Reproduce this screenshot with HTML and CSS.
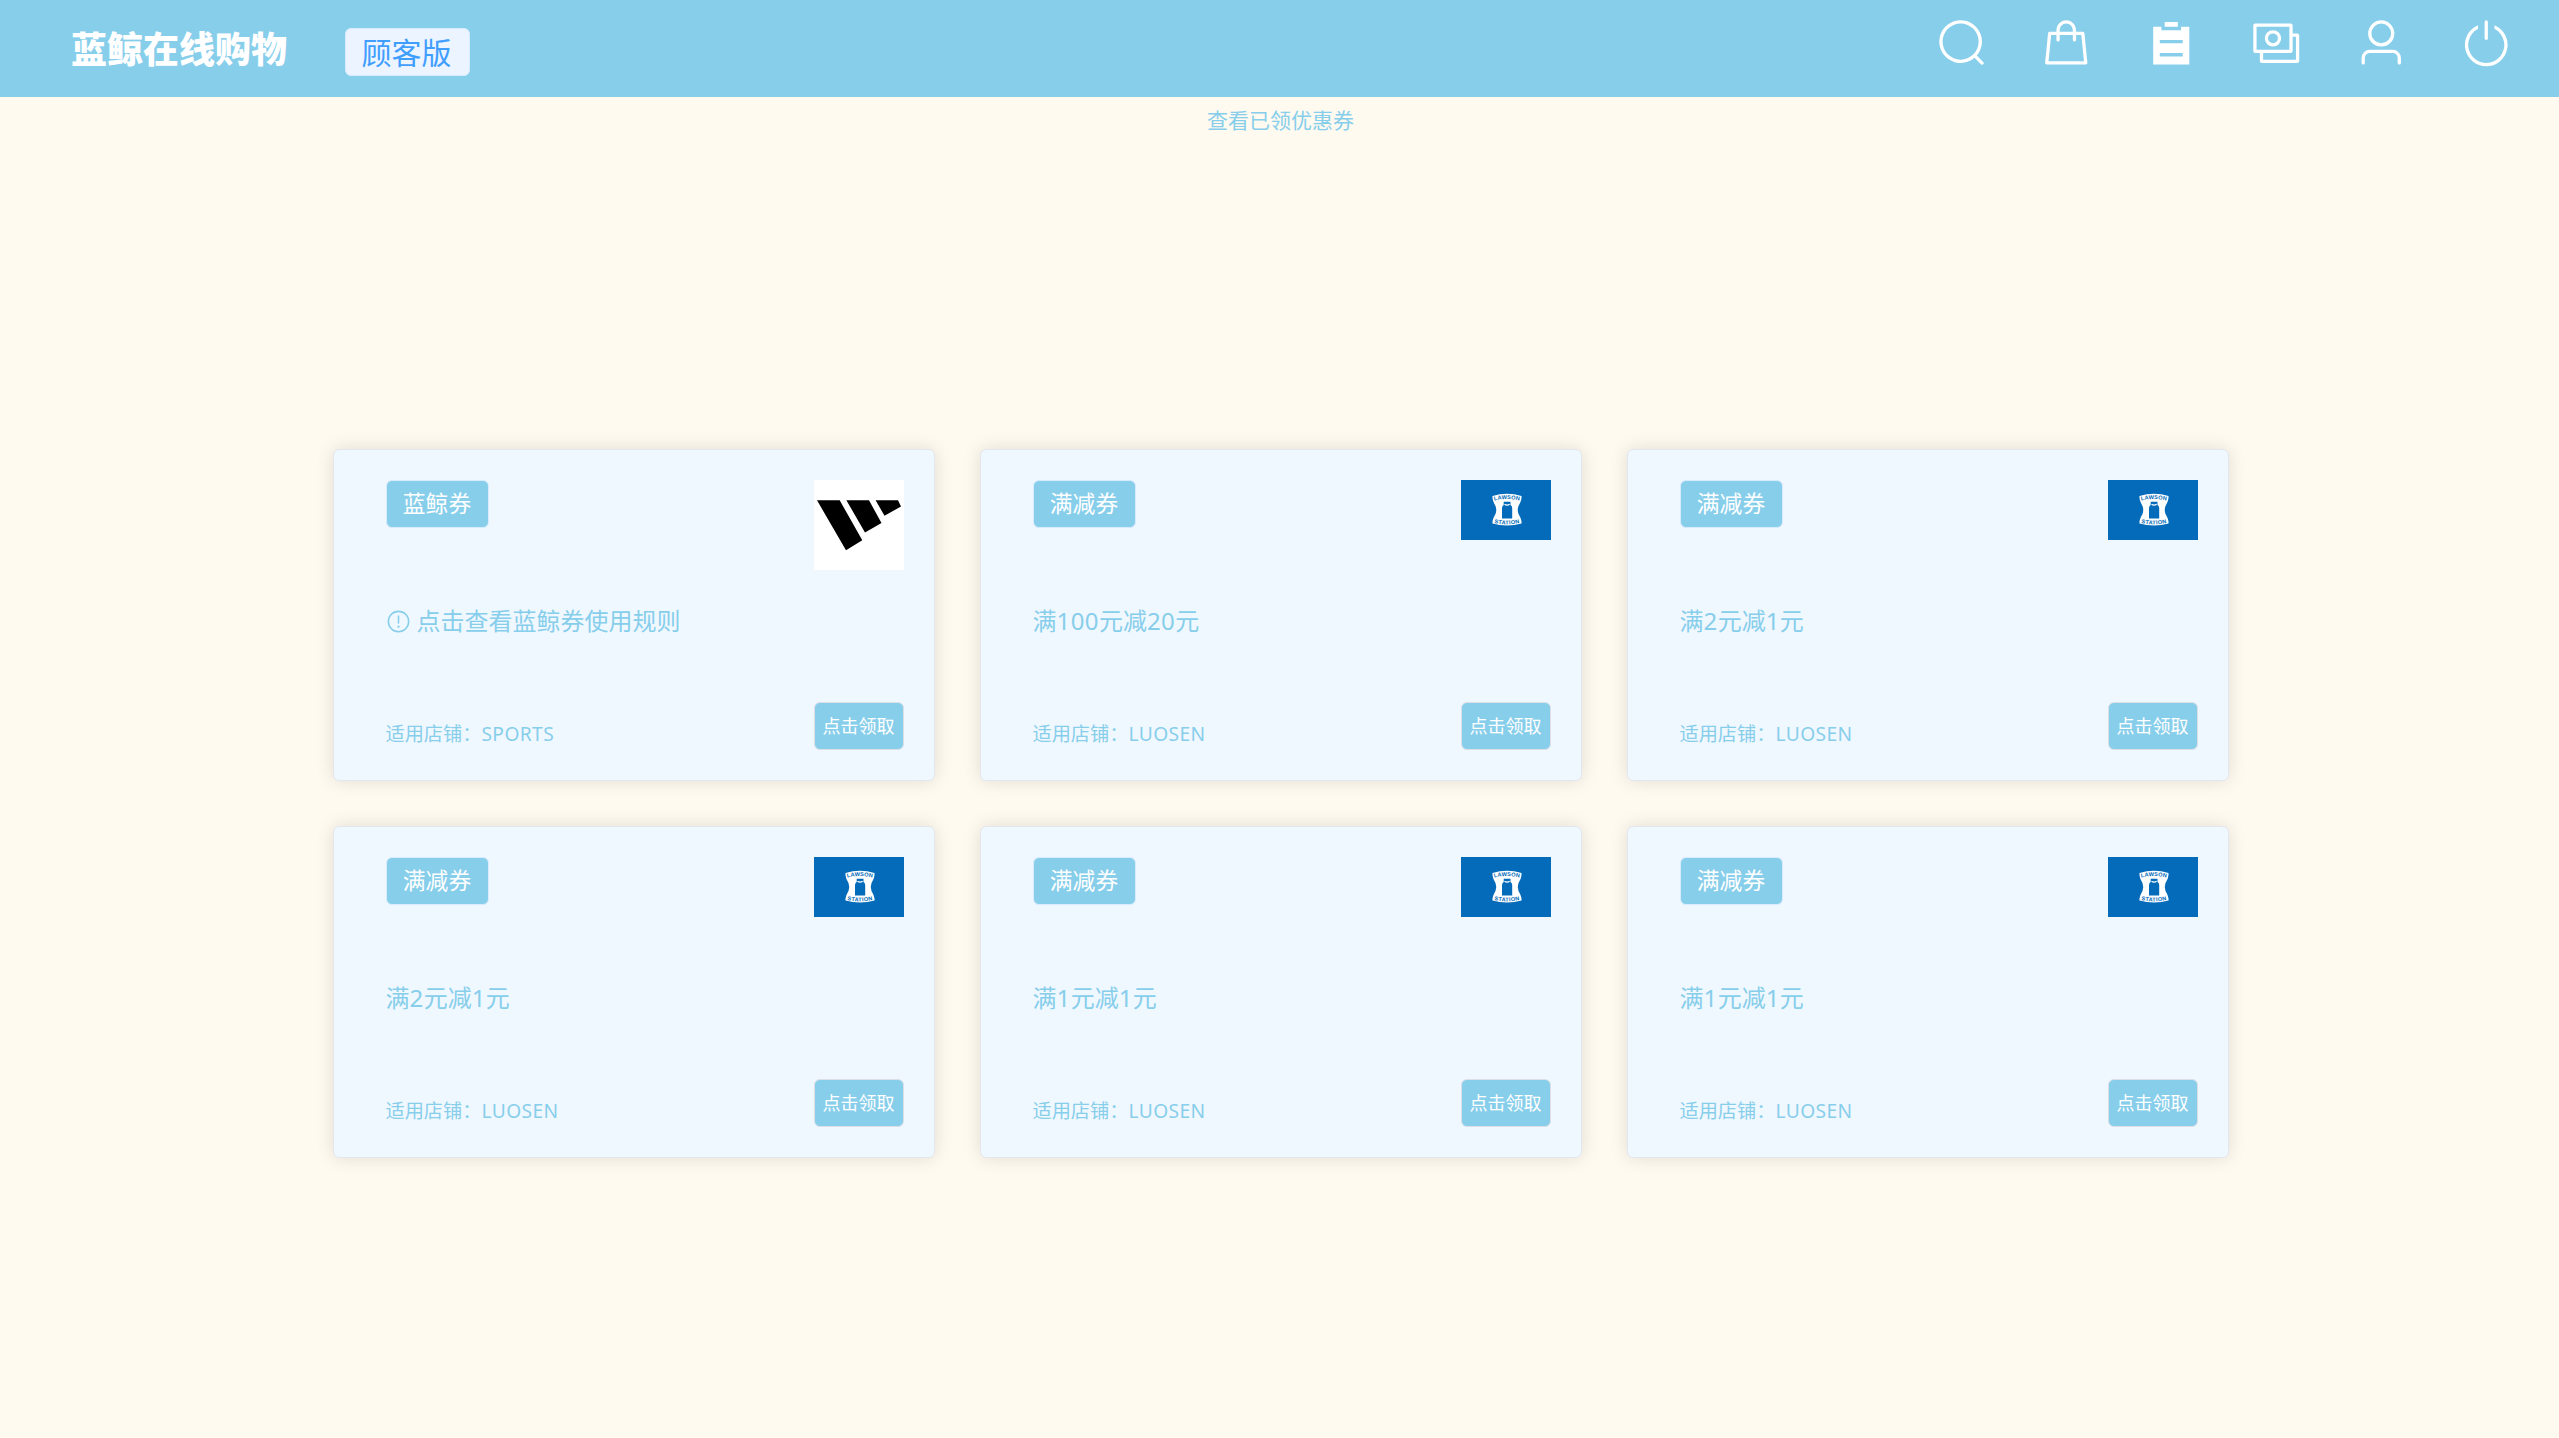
FILE: index.html
```
<!DOCTYPE html>
<html lang="zh-CN">
<head>
<meta charset="utf-8">
<title>蓝鲸在线购物</title>
<link rel="stylesheet" href="styles.css">
</head>
<body>
<svg class="defs" aria-hidden="true">
  <symbol id="sports" viewBox="0 0 90 90">
    <rect width="90" height="90" fill="#fff"/>
    <path d="M3 20.3H25.7L48.3 60.3 32 70.3ZM32.4 20.3H55L67.5 43 51 52.5ZM61.6 20.3H84L87 26.5 70.5 35.7Z"/>
  </symbol>
  <symbol id="luosen" viewBox="0 0 90 60">
    <rect width="90" height="60" fill="#036bb9"/>
    <path d="M31.5 16Q46 11.5 60.500 16Q61 20 57.500 26Q56 30 57.500 34Q61 40 60.500 43.500Q46 47.500 31.500 43.500Q31 40 34.500 34Q36 30 34.500 26Q31 20 31.500 16Z" fill="#fff"/>
    <path d="M42.700 21.800H49.500V25Q51.200 26 51.200 28V38.600H41V28Q41 26 42.700 25Z" fill="#036bb9"/>
    <path d="M43.500 24.300Q46 25.800 48.700 24.300" fill="none" stroke="#fff" stroke-width="1.300"/>
  </symbol>
  <defs>
    <path id="arcTop" d="M33.200 20.600Q46 17.600 58.800 20.600"/>
    <path id="arcBottom" d="M33.200 43Q46 45.800 58.800 43"/>
  </defs>
</svg>

<header class="topbar">
  <h1 class="brand">蓝鲸在线购物</h1>
  <span class="role">顾客版</span>
  <nav class="nav">
    <svg class="nav-icon" viewBox="0 0 1024 1024"><path d="m795.904 750.720 124.992 124.928a32 32 0 0 1-45.248 45.248L750.656 795.904a416 416 0 1 1 45.248-45.248zM480 832a352 352 0 1 0 0-704 352 352 0 0 0 0 704z"/></svg>
    <svg class="nav-icon" viewBox="0 0 1024 1024"><path d="M320 288v-22.336C320 154.688 405.504 64 512 64s192 90.688 192 201.664v22.400h131.072a32 32 0 0 1 31.808 28.800l57.600 576a32 32 0 0 1-31.808 35.200H131.328a32 32 0 0 1-31.808-35.200l57.600-576a32 32 0 0 1 31.808-28.800H320zm64 0h256v-22.336C640 189.248 582.272 128 512 128c-70.272 0-128 61.248-128 137.664v22.400zm-64 64H217.920l-51.200 512h690.560l-51.264-512H704v96a32 32 0 1 1-64 0v-96H384v96a32 32 0 0 1-64 0v-96z"/></svg>
    <svg class="nav-icon" viewBox="0 0 1024 1024"><path d="M704 192h160v736H160V192h160v64h384v-64zM288 512h448v-64H288v64zm0 256h448v-64H288v64zm96-576V96h256v96H384z"/></svg>
    <svg class="nav-icon" viewBox="0 0 1024 1024"><g fill="none" stroke="#fff" stroke-width="64"><rect x="96" y="160" width="704" height="512" rx="8"/><path d="M224 672V856q0 8 8 8H920q8 0 8-8V360q0-8-8-8H800"/><circle cx="448" cy="416" r="128"/></g></svg>
    <svg class="nav-icon" viewBox="0 0 1024 1024"><path d="M512 512a192 192 0 1 0 0-384 192 192 0 0 0 0 384zm0 64a256 256 0 1 1 0-512 256 256 0 0 1 0 512zm320 320v-96a96 96 0 0 0-96-96H288a96 96 0 0 0-96 96v96a32 32 0 1 1-64 0v-96a160 160 0 0 1 160-160h448a160 160 0 0 1 160 160v96a32 32 0 1 1-64 0z"/></svg>
    <svg class="nav-icon" viewBox="0 0 1024 1024"><path d="M352 159.872V230.400a352 352 0 1 0 320 0v-70.528A416.128 416.128 0 0 1 512 960a416 416 0 0 1-160-800.128z"/><path d="M512 64q32 0 32 32v320q0 32-32 32t-32-32V96q0-32 32-32z"/></svg>
  </nav>
</header>

<a class="claimed">查看已领优惠券</a>

<main class="coupons">
  <article class="coupon">
    <div class="info">
      <span class="tag">蓝鲸券</span>
      <p class="rule"><svg class="warn" viewBox="0 0 1024 1024"><path d="M512 64a448 448 0 1 1 0 896 448 448 0 0 1 0-896zm0 832a384 384 0 0 0 0-768 384 384 0 0 0 0 768zm48-176a48 48 0 1 1-96 0 48 48 0 0 1 96 0zm-48-464a32 32 0 0 1 32 32v288a32 32 0 0 1-64 0V288a32 32 0 0 1 32-32z"/></svg>点击查看蓝鲸券使用规则</p>
      <p class="shop">适用店铺：<b>SPORTS</b></p>
    </div>
    <div class="side"><svg class="logo square"><use href="#sports"/></svg><button class="claim">点击领取</button></div>
  </article>
  <article class="coupon">
    <div class="info"><span class="tag">满减券</span><p class="rule">满<b>100</b>元减<b>20</b>元</p><p class="shop">适用店铺：<b>LUOSEN</b></p></div>
    <div class="side"><svg class="logo"><use href="#luosen"/><text><textPath href="#arcTop" textLength="25.500">LAWSON</textPath></text><text><textPath href="#arcBottom" textLength="25.500">STATION</textPath></text></svg><button class="claim">点击领取</button></div>
  </article>
  <article class="coupon">
    <div class="info"><span class="tag">满减券</span><p class="rule">满<b>2</b>元减<b>1</b>元</p><p class="shop">适用店铺：<b>LUOSEN</b></p></div>
    <div class="side"><svg class="logo"><use href="#luosen"/><text><textPath href="#arcTop" textLength="25.500">LAWSON</textPath></text><text><textPath href="#arcBottom" textLength="25.500">STATION</textPath></text></svg><button class="claim">点击领取</button></div>
  </article>
  <article class="coupon">
    <div class="info"><span class="tag">满减券</span><p class="rule">满<b>2</b>元减<b>1</b>元</p><p class="shop">适用店铺：<b>LUOSEN</b></p></div>
    <div class="side"><svg class="logo"><use href="#luosen"/><text><textPath href="#arcTop" textLength="25.500">LAWSON</textPath></text><text><textPath href="#arcBottom" textLength="25.500">STATION</textPath></text></svg><button class="claim">点击领取</button></div>
  </article>
  <article class="coupon">
    <div class="info"><span class="tag">满减券</span><p class="rule">满<b>1</b>元减<b>1</b>元</p><p class="shop">适用店铺：<b>LUOSEN</b></p></div>
    <div class="side"><svg class="logo"><use href="#luosen"/><text><textPath href="#arcTop" textLength="25.500">LAWSON</textPath></text><text><textPath href="#arcBottom" textLength="25.500">STATION</textPath></text></svg><button class="claim">点击领取</button></div>
  </article>
  <article class="coupon">
    <div class="info"><span class="tag">满减券</span><p class="rule">满<b>1</b>元减<b>1</b>元</p><p class="shop">适用店铺：<b>LUOSEN</b></p></div>
    <div class="side"><svg class="logo"><use href="#luosen"/><text><textPath href="#arcTop" textLength="25.500">LAWSON</textPath></text><text><textPath href="#arcBottom" textLength="25.500">STATION</textPath></text></svg><button class="claim">点击领取</button></div>
  </article>
</main>
</body>
</html>
```
FILE: styles.css
```
* { box-sizing: border-box; }

body {
  margin: 0;
  min-height: 1438px;
  background: #fffaf0;
  color: #87ceeb;
  font-family: "Noto Sans", "Noto Sans CJK SC", sans-serif;
}

p, h1 { margin: 0; }

b { font-weight: 400; }

.defs { position: absolute; width: 0; height: 0; }

.topbar {
  display: flex;
  align-items: flex-start;
  height: 97px;
  padding: 0 46.5px 0 71px;
  background: #87ceeb;
}

.brand {
  margin-top: 25px;
  color: #fff;
  font-size: 36px;
  line-height: 50px;
  font-weight: 900;
}

.role {
  width: 125px;
  height: 48px;
  margin: 28px 0 0 58px;
  padding-right: 2px;
  border: 1.5px solid #d9ecff;
  border-radius: 6px;
  background: #ecf5ff;
  color: #409eff;
  font-size: 30px;
  line-height: 48px;
  text-align: center;
}

.nav {
  display: flex;
  gap: 52.4px;
  margin: 17px 0 0 auto;
}

.nav-icon {
  width: 52.5px;
  height: 52.5px;
  fill: #fff;
}

.claimed {
  display: block;
  height: 48px;
  padding-left: 2px;
  font-size: 21px;
  line-height: 47px;
  text-align: center;
}

.coupons {
  display: grid;
  grid-template-columns: repeat(3, 602px);
  grid-auto-rows: 332px;
  gap: 45px;
  justify-content: center;
  padding: 304px 0 0 2px;
}

.coupon {
  display: flex;
  justify-content: space-between;
  padding: 30px 30px 30px 52px;
  border: 1.5px solid #e4e7ed;
  border-radius: 6px;
  background: #f0f8ff;
  box-shadow: 0 0 18px rgba(0, 0, 0, .12);
}

.info {
  display: flex;
  flex-direction: column;
  align-items: flex-start;
}

.tag {
  width: 103px;
  height: 48px;
  border: 1.5px solid #d9ecff;
  border-radius: 6px;
  background: #87ceeb;
  color: #fff;
  font-size: 22.8px;
  line-height: 46px;
  text-align: center;
}

.rule {
  display: flex;
  align-items: center;
  height: 40px;
  margin-top: 73px;
  font-size: 24px;
  line-height: 40px;
}

.rule b { letter-spacing: .4px; }

.warn {
  width: 25px;
  height: 25px;
  margin-right: 6px;
  fill: #87ceeb;
}

.shop {
  margin-top: 78px;
  font-size: 19.2px;
  line-height: 30px;
}

.shop b { letter-spacing: .4px; }

.side {
  display: flex;
  flex-direction: column;
  justify-content: space-between;
  width: 90px;
}

.logo {
  width: 90px;
  height: 60px;
}

.logo text {
  fill: #036bb9;
  font: bold 5.6px "Liberation Sans", sans-serif;
}

.logo.square { height: 90px; }

.claim {
  height: 48px;
  padding: 0;
  border: 1.5px solid #dcdfe6;
  border-radius: 6px;
  background: #87ceeb;
  color: #fff;
  font: 18px/44px "Noto Sans", "Noto Sans CJK SC", sans-serif;
}
```
